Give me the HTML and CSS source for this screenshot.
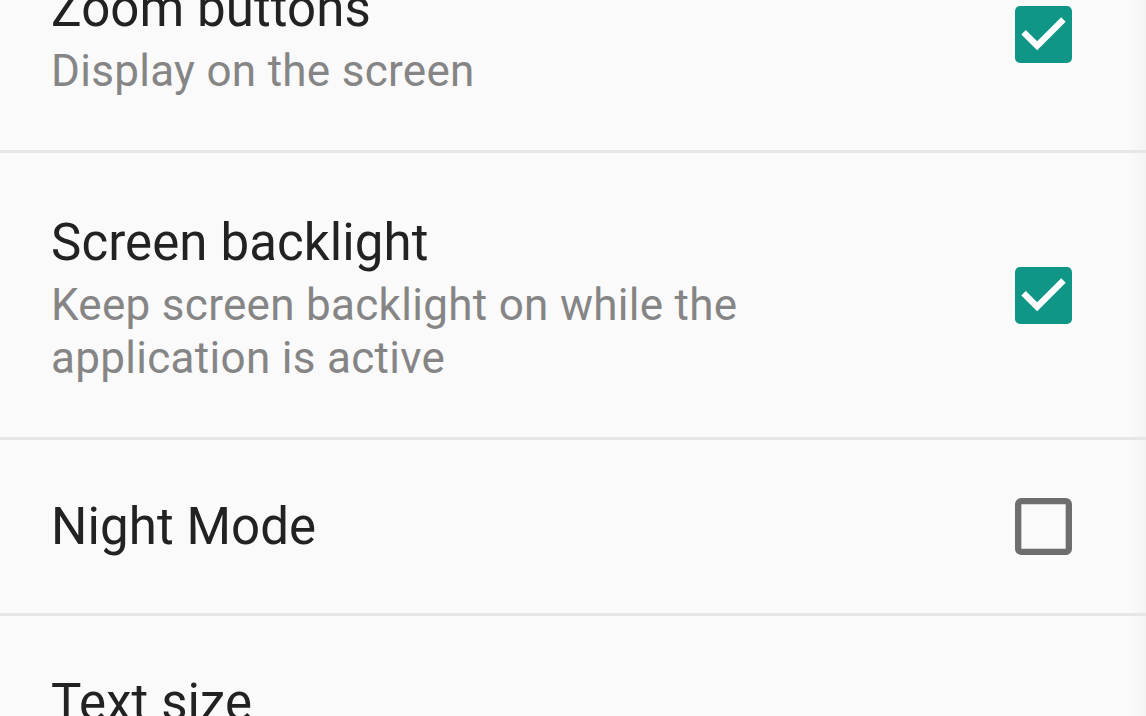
FILE: index.html
```html
<!DOCTYPE html>
<html>
<head>
    <title>Settings</title>
    <link rel="stylesheet" href="styles.css">
</head>
<body>
    <div id="Settings" class="list">

        <div class="pref">
            <div class="text">
                <div class="title">Zoom buttons</div>
                <div class="summary">Display on the screen</div>
            </div>
            <div class="widget">
                <svg class="check on" viewBox="3 3 18 18"><rect x="3" y="3" width="18" height="18" rx="1.6" /><path d="M10 17l-5-5 1.41-1.41L10 14.17l7.59-7.59L19 8l-9 9z" /></svg>
            </div>
        </div>

        <div class="pref">
            <div class="text">
                <div class="title">Screen backlight</div>
                <div class="summary">Keep screen backlight on while the<br />application is active</div>
            </div>
            <div class="widget">
                <svg class="check on" viewBox="3 3 18 18"><rect x="3" y="3" width="18" height="18" rx="1.6" /><path d="M10 17l-5-5 1.41-1.41L10 14.17l7.59-7.59L19 8l-9 9z" /></svg>
            </div>
        </div>

        <div class="pref single">
            <div class="text">
                <div class="title">Night Mode</div>
            </div>
            <div class="widget">
                <svg class="check off" viewBox="3 3 18 18"><path d="M19 5v14H5V5h14m0-2H5c-1.1 0-2 .9-2 2v14c0 1.1.9 2 2 2h14c1.1 0 2-.9 2-2V5c0-1.1-.9-2-2-2z" /></svg>
            </div>
        </div>

        <div class="pref single last">
            <div class="text">
                <div class="title">Text size</div>
            </div>
        </div>

    </div>
</body>
</html>
```

FILE: styles.css
```css
html, body { height: 100%; }
body { margin: 0; overflow: hidden; background: linear-gradient(to right, #fafafa 1130px, #f4f4f4 1146px); font-family: Roboto, "Noto Sans", sans-serif; }
.list { margin-top: -81px; }
.pref { display: flex; align-items: stretch; border-bottom: solid 3px #e6e6e6; }
.pref.last { border-bottom: none; }
.pref .text { flex: 1; padding: 60px 0 52px 51px; }
.pref.single .text { padding: 57px 0 56px 51px; }
.title { font-size: 51px; line-height: 60px; color: #222222; letter-spacing: 0.1px; }
.summary { margin-top: 6px; font-size: 44px; line-height: 53px; color: #858585; letter-spacing: 0.3px; }
.widget { display: flex; align-items: center; margin-right: 74px; }
.check { display: block; width: 57px; height: 57px; }
.check.on rect { fill: #0f9686; }
.check.on path { fill: #ffffff; }
.check.off path { fill: #6e6e6e; }
```
